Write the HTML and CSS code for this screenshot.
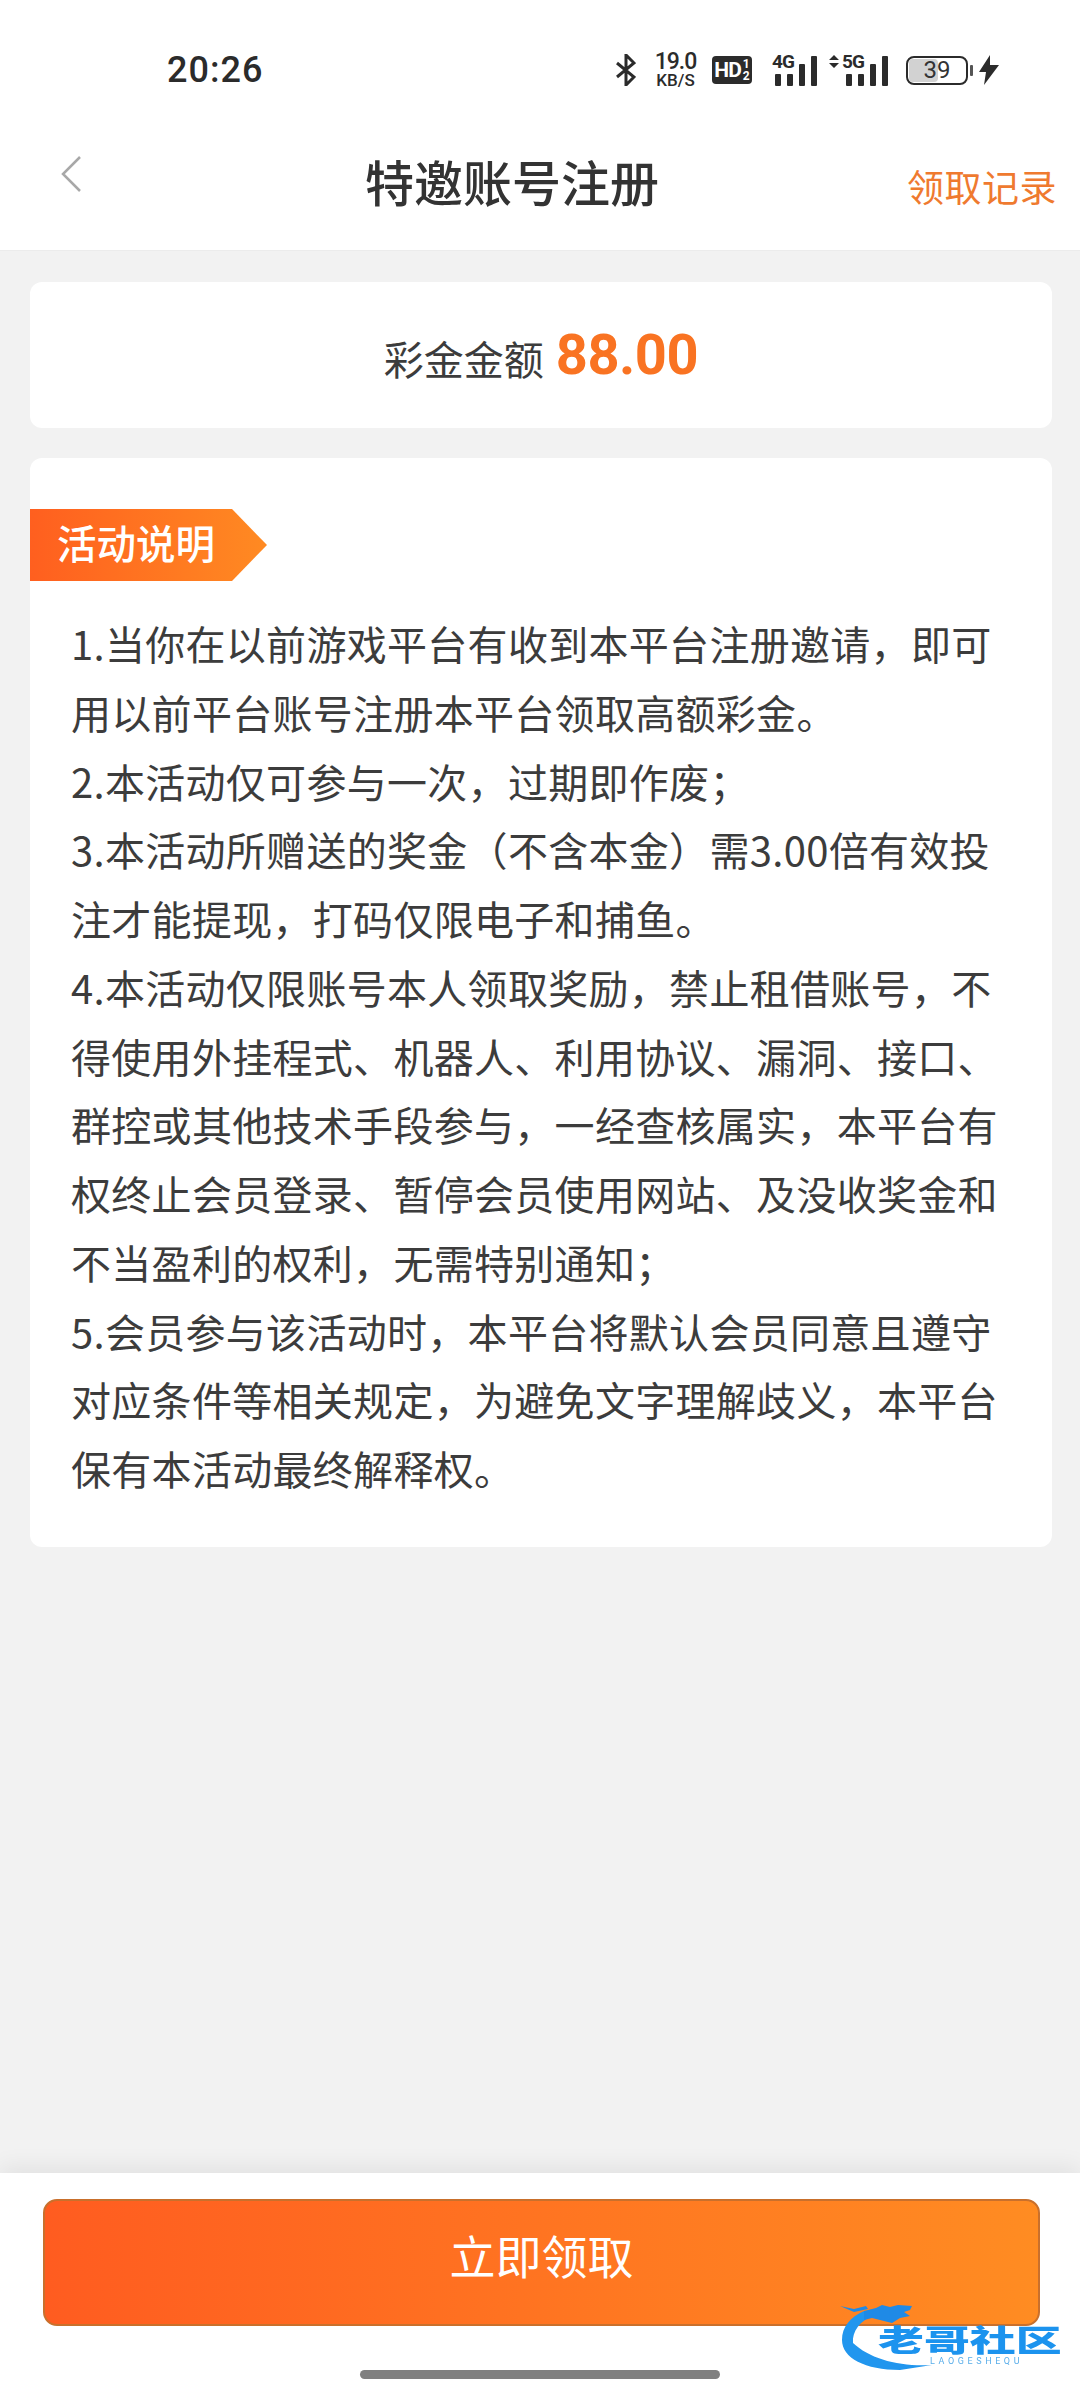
FILE: index.html
```html
<!DOCTYPE html>
<html lang="zh-CN">
<head>
  <meta charset="UTF-8">
  <title>特邀账号注册</title>
  <link rel="stylesheet" href="styles.css">
</head>
<body>
  <div class="app">
    <div class="status-bar">
      <span class="time">20:26</span>
      <div class="status-icons">
        <svg class="bt" width="20" height="32" viewBox="0 0 20 32"><path d="M1 9l17 14-8 8V1l8 8L1 23" fill="none" stroke="#2b2b2b" stroke-width="3"/></svg>
        <div class="speed"><b>19.0</b><span>KB/S</span></div>
        <div class="hd">HD<span class="hd-sub"><i>1</i><i>2</i></span></div>
        <svg class="signal-4g" width="46" height="40" viewBox="0 -9 46 40">
          <text x="0" y="13" class="net">4G</text>
          <rect x="3" y="19" width="6" height="12" rx="1"/><rect x="15" y="19" width="6" height="12" rx="1"/><rect x="27" y="9" width="6" height="22" rx="1"/><rect x="39" y="1" width="6" height="30" rx="1"/>
        </svg>
        <svg class="signal-5g" width="60" height="40" viewBox="0 -9 60 40">
          <path d="M0 5l5-5 5 5zM0 8h10l-5 5z"/>
          <text x="13" y="13" class="net">5G</text>
          <rect x="17" y="19" width="6" height="12" rx="1"/><rect x="29" y="19" width="6" height="12" rx="1"/><rect x="41" y="9" width="6" height="22" rx="1"/><rect x="53" y="1" width="6" height="30" rx="1"/>
        </svg>
        <div class="battery"><div class="battery-fill"></div><span>39</span></div>
        <svg class="bolt" width="20" height="30" viewBox="0 0 20 30"><path d="M11 0L0 17h7L5 30l15-20h-9z" fill="#2b2b2b"/></svg>
      </div>
    </div>

    <div class="nav">
      <svg class="back" width="22" height="36" viewBox="0 0 22 36"><path d="M20 1L3 18l17 17" fill="none" stroke="#a8a8a8" stroke-width="2.5"/></svg>
      <h1>特邀账号注册</h1>
      <a class="records">领取记录</a>
    </div>

    <div class="content">
      <div class="card amount">
        <span class="amount-label">彩金金额</span>
        <span class="amount-value">88.00</span>
      </div>

      <div class="card rules">
        <div class="tag">活动说明</div>
        <div class="rules-text">
          <p>1.当你在以前游戏平台有收到本平台注册邀请，即可用以前平台账号注册本平台领取高额彩金。</p>
          <p>2.本活动仅可参与一次，过期即作废；</p>
          <p>3.本活动所赠送的奖金（不含本金）需3.00倍有效投注才能提现，打码仅限电子和捕鱼。</p>
          <p>4.本活动仅限账号本人领取奖励，禁止租借账号，不得使用外挂程式、机器人、利用协议、漏洞、接口、群控或其他技术手段参与，一经查核属实，本平台有权终止会员登录、暂停会员使用网站、及没收奖金和不当盈利的权利，无需特别通知；</p>
          <p>5.会员参与该活动时，本平台将默认会员同意且遵守对应条件等相关规定，为避免文字理解歧义，本平台保有本活动最终解释权。</p>
        </div>
      </div>
    </div>

    <div class="footer">
      <button class="claim">立即领取</button>
      <div class="home-bar"></div>
      <div class="watermark">
        <svg class="dragon" width="100" height="70" viewBox="0 0 100 70">
          <path d="M24 8C10 14 2 24 2 37c0 18 23 30 58 30l32-5C60 64 30 56 13 40c-1-12 7-22 21-28z" fill="#2196ee"/>
          <path d="M24 8l12-3 6-3 8 2 8-2 14 1-2 4-6 2 6 4-10 2-8 5-12-3-8-2-8 2z" fill="#1f8ae6"/>
          <path d="M0 3l14 3 12-3 2 3-14 3z" fill="#1f8ae6"/>
        </svg>
        <div class="wm-title">老哥社区</div>
        <div class="wm-sub">LAOGESHEQU</div>
      </div>
    </div>
  </div>
</body>
</html>
```

FILE: styles.css
```css
* {
  box-sizing: border-box;
}
body {
  margin: 0;
  font-family: "Noto Sans CJK SC", "Noto Sans", sans-serif;
  background: #f2f2f2;
  color: #3c3c3c;
}
.app {
  width: 1080px;
  height: 2400px;
  display: flex;
  flex-direction: column;
  overflow: hidden;
}

/* status bar */
.status-bar {
  height: 100px;
  background: #fff;
  display: flex;
  align-items: center;
  justify-content: space-between;
  padding: 40px 81px 0 167px;
  color: #2b2b2b;
}
.time {
  font-family: Roboto, sans-serif;
  font-size: 36px;
  font-weight: 500;
  letter-spacing: 1px;
}
.status-icons {
  display: flex;
  align-items: center;
}
.status-icons svg {
  fill: #2b2b2b;
  display: block;
}
.net {
  font-family: Roboto, sans-serif;
  font-size: 19px;
  font-weight: 700;
  letter-spacing: -1px;
}
.speed {
  display: flex;
  flex-direction: column;
  align-items: center;
  gap: 3px;
  font-family: Roboto, sans-serif;
  margin-left: 18px;
  width: 43px;
}
.speed b {
  font-size: 23px;
  font-weight: 500;
  line-height: 17px;
  letter-spacing: -1px;
}
.speed span {
  font-size: 17px;
  font-weight: 500;
  line-height: 15px;
}
.hd {
  width: 40px;
  height: 28px;
  margin-left: 15px;
  background: #2b2b2b;
  border-radius: 4px;
  color: #fff;
  font-family: Roboto, sans-serif;
  font-size: 21px;
  font-weight: 700;
  line-height: 28px;
  display: flex;
  justify-content: center;
  letter-spacing: -1px;
}
.hd-sub {
  display: flex;
  flex-direction: column;
  font-size: 12px;
  line-height: 12px;
  margin: 2px 0 0 2px;
  letter-spacing: 0;
}
.hd-sub i {
  font-style: normal;
}
.signal-4g {
  margin-left: 20px;
  margin-top: -8px;
}
.signal-5g {
  margin-left: 11px;
  margin-top: -8px;
}
.battery {
  position: relative;
  width: 62px;
  height: 29px;
  margin-left: 17px;
  border: 2px solid #2b2b2b;
  border-radius: 8px;
  font-family: Roboto, sans-serif;
  font-size: 24px;
  line-height: 25px;
  text-align: center;
  color: #333;
}
.battery::after {
  content: "";
  position: absolute;
  right: -7px;
  top: 7px;
  width: 3px;
  height: 11px;
  background: #555;
  border-radius: 1px;
}
.battery-fill {
  position: absolute;
  left: 1px;
  top: 1px;
  bottom: 1px;
  width: 29px;
  background: #d2d2d2;
  border-radius: 4px;
}
.battery span {
  position: relative;
  display: block;
}
.bolt {
  margin-left: 11px;
}

/* nav */
.nav {
  position: relative;
  height: 151px;
  padding-top: 47px;
  background: #fff;
  border-bottom: 1px solid #ececec;
  display: flex;
  justify-content: center;
}
.nav h1 {
  margin: 0 0 0 -56px;
  font-size: 49px;
  font-weight: 500;
  line-height: 68px;
  color: #333;
}
.back {
  position: absolute;
  left: 60px;
  top: 56px;
}
.records {
  position: absolute;
  right: 23px;
  top: 59px;
  font-size: 37px;
  line-height: 54px;
  letter-spacing: 0.5px;
  color: #ef7a2f;
}

/* cards */
.content {
  flex: 1;
  padding: 31px 28px 0 30px;
}
.card {
  background: #fff;
  border-radius: 12px;
}
.amount {
  height: 146px;
  display: flex;
  align-items: center;
  justify-content: center;
  gap: 12px;
  margin-bottom: 30px;
}
.amount-label {
  font-size: 40px;
  line-height: 56px;
  margin-top: 6px;
}
.amount-value {
  font-family: Roboto, sans-serif;
  font-size: 56px;
  font-weight: 700;
  line-height: 66px;
  letter-spacing: -0.5px;
  color: #f97322;
}
.rules {
  height: 1089px;
  padding-top: 51px;
}
.tag {
  width: 237px;
  height: 72px;
  padding-left: 27px;
  background: linear-gradient(90deg, #ff5f1f, #ff8a22);
  clip-path: polygon(0 0, 202px 0, 100% 50%, 202px 100%, 0 100%);
  color: #fff;
  font-size: 39.5px;
  font-weight: 500;
  line-height: 65px;
}
.rules-text {
  padding: 28px 30px 0 41px;
  font-size: 40px;
  line-height: 68.75px;
  letter-spacing: 0.3px;
}
.rules-text p {
  margin: 0;
}

/* bottom */
.footer {
  position: relative;
  height: 227px;
  background: #fff;
  box-shadow: 0 -6px 22px rgba(0,0,0,0.07);
  padding: 26px 40px 0 43px;
}
.claim {
  display: block;
  width: 100%;
  height: 127px;
  border: 2px solid #c9702c;
  border-radius: 14px;
  background: linear-gradient(90deg, #ff5c20, #ff8c22);
  color: #fff;
  font-family: inherit;
  font-size: 46px;
  padding: 0 0 18px 0;
}
.home-bar {
  width: 360px;
  height: 9px;
  margin: 44px 0 0 317px;
  background: #808080;
  border-radius: 5px;
}

/* watermark sits over the button corner */
.watermark {
  position: absolute;
  left: 838px;
  top: 130px;
  width: 224px;
  height: 70px;
  filter: blur(0.5px);
}
.dragon {
  position: absolute;
  left: 2px;
  top: 0;
}
.wm-title {
  position: absolute;
  left: 40px;
  top: 19px;
  font-size: 30px;
  font-weight: 900;
  line-height: 32px;
  white-space: nowrap;
  color: #1c93ee;
  transform: scaleX(1.53);
  transform-origin: left top;
}
.wm-sub {
  position: absolute;
  left: 92px;
  top: 53px;
  font-family: Roboto, sans-serif;
  font-size: 9px;
  line-height: 10px;
  letter-spacing: 3.6px;
  color: #5aaeea;
}
```
